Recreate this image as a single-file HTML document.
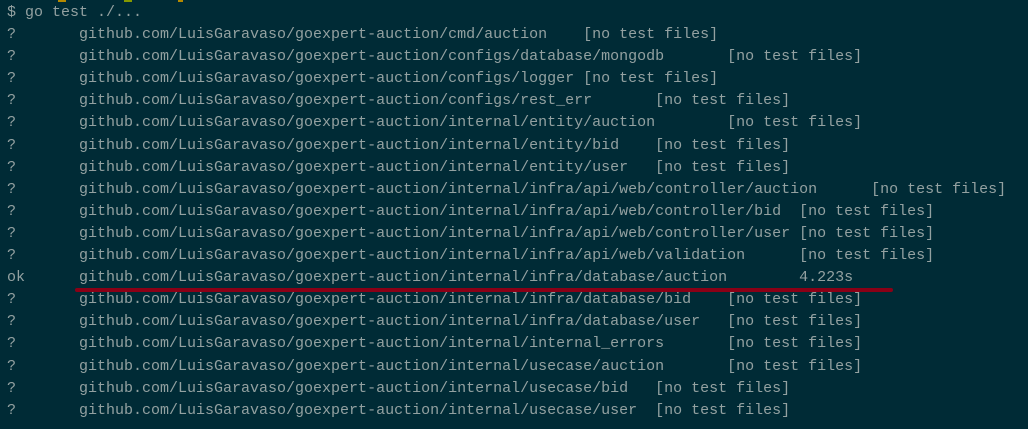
<!DOCTYPE html>
<html><head><meta charset="utf-8"><style>
html,body{margin:0;padding:0;width:1028px;height:429px;overflow:hidden;background:#002b36;}
pre{margin:0;position:absolute;left:7px;top:2px;font-family:"Liberation Mono",monospace;font-size:15px;line-height:22.1px;color:#93a1a1;tab-size:8;-moz-tab-size:8;}
.r{position:absolute;left:75px;top:288px;width:818px;height:4px;background:#8a0016;border-radius:2px;}
.y{position:absolute;top:0;height:2px;background:#b58900;}
</style></head><body>
<div class="y" style="left:58px;width:8px"></div>
<div class="y" style="left:124px;width:8px;background:#859900"></div>
<div class="y" style="left:178px;width:5px"></div>
<pre>$ go test ./...
?   	github.com/LuisGaravaso/goexpert-auction/cmd/auction	[no test files]
?   	github.com/LuisGaravaso/goexpert-auction/configs/database/mongodb	[no test files]
?   	github.com/LuisGaravaso/goexpert-auction/configs/logger	[no test files]
?   	github.com/LuisGaravaso/goexpert-auction/configs/rest_err	[no test files]
?   	github.com/LuisGaravaso/goexpert-auction/internal/entity/auction	[no test files]
?   	github.com/LuisGaravaso/goexpert-auction/internal/entity/bid	[no test files]
?   	github.com/LuisGaravaso/goexpert-auction/internal/entity/user	[no test files]
?   	github.com/LuisGaravaso/goexpert-auction/internal/infra/api/web/controller/auction	[no test files]
?   	github.com/LuisGaravaso/goexpert-auction/internal/infra/api/web/controller/bid	[no test files]
?   	github.com/LuisGaravaso/goexpert-auction/internal/infra/api/web/controller/user	[no test files]
?   	github.com/LuisGaravaso/goexpert-auction/internal/infra/api/web/validation	[no test files]
ok  	github.com/LuisGaravaso/goexpert-auction/internal/infra/database/auction	4.223s
?   	github.com/LuisGaravaso/goexpert-auction/internal/infra/database/bid	[no test files]
?   	github.com/LuisGaravaso/goexpert-auction/internal/infra/database/user	[no test files]
?   	github.com/LuisGaravaso/goexpert-auction/internal/internal_errors	[no test files]
?   	github.com/LuisGaravaso/goexpert-auction/internal/usecase/auction	[no test files]
?   	github.com/LuisGaravaso/goexpert-auction/internal/usecase/bid	[no test files]
?   	github.com/LuisGaravaso/goexpert-auction/internal/usecase/user	[no test files]</pre>
<div class="r"></div>
</body></html>
